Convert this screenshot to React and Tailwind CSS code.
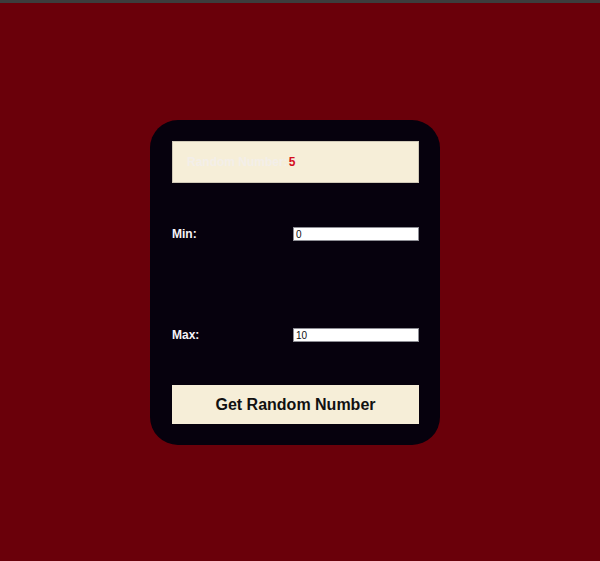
export default function App() {
  return (
    <div className="w-[600px] h-[561px] bg-[#6a000a] overflow-hidden" style={{ fontFamily: '"Liberation Sans", Arial, sans-serif' }}>
      <div className="h-[3px] bg-[#3d3d3d]" />
      <div className="ml-[150px] mt-[117px] w-[290px] h-[325px] rounded-[28px] bg-[#06010d] px-[22px] pt-[21px] flex flex-col">
        <div className="h-[42px] w-[247px] bg-[#f6eed8] border border-[#cfc8b6] flex items-center pl-[14px]">
          <span className="text-[12px] font-bold text-[#f3eee9]">Random Number:</span>
          <span className="text-[12px] font-bold text-[#d40f1e] ml-[1px]">5</span>
        </div>
        <div className="mt-[44px] flex items-center justify-between w-[247px] h-[14px]">
          <span className="text-[12px] font-bold text-[#f5f3f8]">Min:</span>
          <input defaultValue="0" className="w-[126px] h-[14px] bg-white border border-[#8e8e95] text-[10px] text-[#111] px-[2px] outline-none" />
        </div>
        <div className="mt-[87px] flex items-center justify-between w-[247px] h-[14px]">
          <span className="text-[12px] font-bold text-[#f5f3f8]">Max:</span>
          <input defaultValue="10" className="w-[126px] h-[14px] bg-white border border-[#8e8e95] text-[10px] text-[#111] px-[2px] outline-none" />
        </div>
        <button className="mt-[43px] w-[247px] h-[39px] bg-[#f6eed8] text-[16px] font-bold text-[#111] flex items-center justify-center">
          Get Random Number
        </button>
      </div>
    </div>
  );
}
